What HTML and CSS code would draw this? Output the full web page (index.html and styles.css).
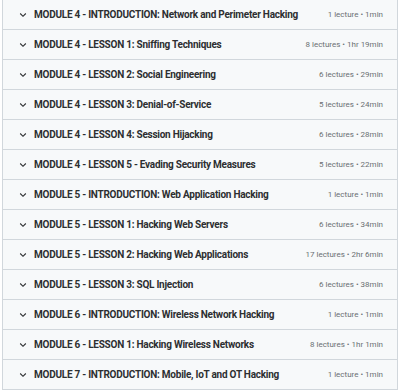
FILE: index.html
```html
<!DOCTYPE html>
<html>
<head>
<meta charset="utf-8">
<link rel="stylesheet" href="styles.css">
</head>
<body>
<div class="curriculum">
  <div class="row"><span class="chev"><svg width="8" height="6" viewBox="0 0 8 6"><path d="M1.2 1.5 L4 4.3 L6.8 1.5" fill="none" stroke="#2d2f31" stroke-width="1.1"/></svg></span><span class="title">MODULE 4 - INTRODUCTION: Network and Perimeter Hacking</span><span class="meta">1 lecture • 1min</span></div>
  <div class="row"><span class="chev"><svg width="8" height="6" viewBox="0 0 8 6"><path d="M1.2 1.5 L4 4.3 L6.8 1.5" fill="none" stroke="#2d2f31" stroke-width="1.1"/></svg></span><span class="title">MODULE 4 - LESSON 1: Sniffing Techniques</span><span class="meta">8 lectures • 1hr 19min</span></div>
  <div class="row"><span class="chev"><svg width="8" height="6" viewBox="0 0 8 6"><path d="M1.2 1.5 L4 4.3 L6.8 1.5" fill="none" stroke="#2d2f31" stroke-width="1.1"/></svg></span><span class="title">MODULE 4 - LESSON 2: Social Engineering</span><span class="meta">6 lectures • 29min</span></div>
  <div class="row"><span class="chev"><svg width="8" height="6" viewBox="0 0 8 6"><path d="M1.2 1.5 L4 4.3 L6.8 1.5" fill="none" stroke="#2d2f31" stroke-width="1.1"/></svg></span><span class="title">MODULE 4 - LESSON 3: Denial-of-Service</span><span class="meta">5 lectures • 24min</span></div>
  <div class="row"><span class="chev"><svg width="8" height="6" viewBox="0 0 8 6"><path d="M1.2 1.5 L4 4.3 L6.8 1.5" fill="none" stroke="#2d2f31" stroke-width="1.1"/></svg></span><span class="title">MODULE 4 - LESSON 4: Session Hijacking</span><span class="meta">6 lectures • 28min</span></div>
  <div class="row"><span class="chev"><svg width="8" height="6" viewBox="0 0 8 6"><path d="M1.2 1.5 L4 4.3 L6.8 1.5" fill="none" stroke="#2d2f31" stroke-width="1.1"/></svg></span><span class="title">MODULE 4 - LESSON 5 - Evading Security Measures</span><span class="meta">5 lectures • 22min</span></div>
  <div class="row"><span class="chev"><svg width="8" height="6" viewBox="0 0 8 6"><path d="M1.2 1.5 L4 4.3 L6.8 1.5" fill="none" stroke="#2d2f31" stroke-width="1.1"/></svg></span><span class="title">MODULE 5 - INTRODUCTION: Web Application Hacking</span><span class="meta">1 lecture • 1min</span></div>
  <div class="row"><span class="chev"><svg width="8" height="6" viewBox="0 0 8 6"><path d="M1.2 1.5 L4 4.3 L6.8 1.5" fill="none" stroke="#2d2f31" stroke-width="1.1"/></svg></span><span class="title">MODULE 5 - LESSON 1: Hacking Web Servers</span><span class="meta">6 lectures • 34min</span></div>
  <div class="row"><span class="chev"><svg width="8" height="6" viewBox="0 0 8 6"><path d="M1.2 1.5 L4 4.3 L6.8 1.5" fill="none" stroke="#2d2f31" stroke-width="1.1"/></svg></span><span class="title">MODULE 5 - LESSON 2: Hacking Web Applications</span><span class="meta">17 lectures • 2hr 6min</span></div>
  <div class="row"><span class="chev"><svg width="8" height="6" viewBox="0 0 8 6"><path d="M1.2 1.5 L4 4.3 L6.8 1.5" fill="none" stroke="#2d2f31" stroke-width="1.1"/></svg></span><span class="title">MODULE 5 - LESSON 3: SQL Injection</span><span class="meta">6 lectures • 38min</span></div>
  <div class="row"><span class="chev"><svg width="8" height="6" viewBox="0 0 8 6"><path d="M1.2 1.5 L4 4.3 L6.8 1.5" fill="none" stroke="#2d2f31" stroke-width="1.1"/></svg></span><span class="title">MODULE 6 - INTRODUCTION: Wireless Network Hacking</span><span class="meta">1 lecture • 1min</span></div>
  <div class="row"><span class="chev"><svg width="8" height="6" viewBox="0 0 8 6"><path d="M1.2 1.5 L4 4.3 L6.8 1.5" fill="none" stroke="#2d2f31" stroke-width="1.1"/></svg></span><span class="title">MODULE 6 - LESSON 1: Hacking Wireless Networks</span><span class="meta">8 lectures • 1hr 1min</span></div>
  <div class="row"><span class="chev"><svg width="8" height="6" viewBox="0 0 8 6"><path d="M1.2 1.5 L4 4.3 L6.8 1.5" fill="none" stroke="#2d2f31" stroke-width="1.1"/></svg></span><span class="title">MODULE 7 - INTRODUCTION: Mobile, IoT and OT Hacking</span><span class="meta">1 lecture • 1min</span></div>
</div>
</body>
</html>
```
FILE: styles.css
```css
html, body {
  margin: 0;
  padding: 0;
  background: #ffffff;
}
body {
  font-family: Roboto, "Noto Sans", sans-serif;
}
.curriculum {
  margin: 0 2px;
  border-left: 1px solid #d1d7dc;
  border-right: 1px solid #d1d7dc;
  border-bottom: 1px solid #d1d7dc;
  background: #f7f9fa;
}
.row {
  height: 29px;
  border-bottom: 1px solid #d1d7dc;
  display: flex;
  align-items: center;
  padding: 0 14px 0 16px;
}
.row:last-child {
  border-bottom: none;
}
.chev {
  width: 15px;
  flex-shrink: 0;
  display: flex;
  align-items: center;
}
.chev svg {
  display: block;
}
.title {
  flex: 1;
  font-size: 10px;
  font-weight: 700;
  letter-spacing: -0.25px;
  color: #2d2f31;
  white-space: nowrap;
}
.meta {
  flex-shrink: 0;
  font-size: 8px;
  color: #6a6f73;
  white-space: nowrap;
}
```
